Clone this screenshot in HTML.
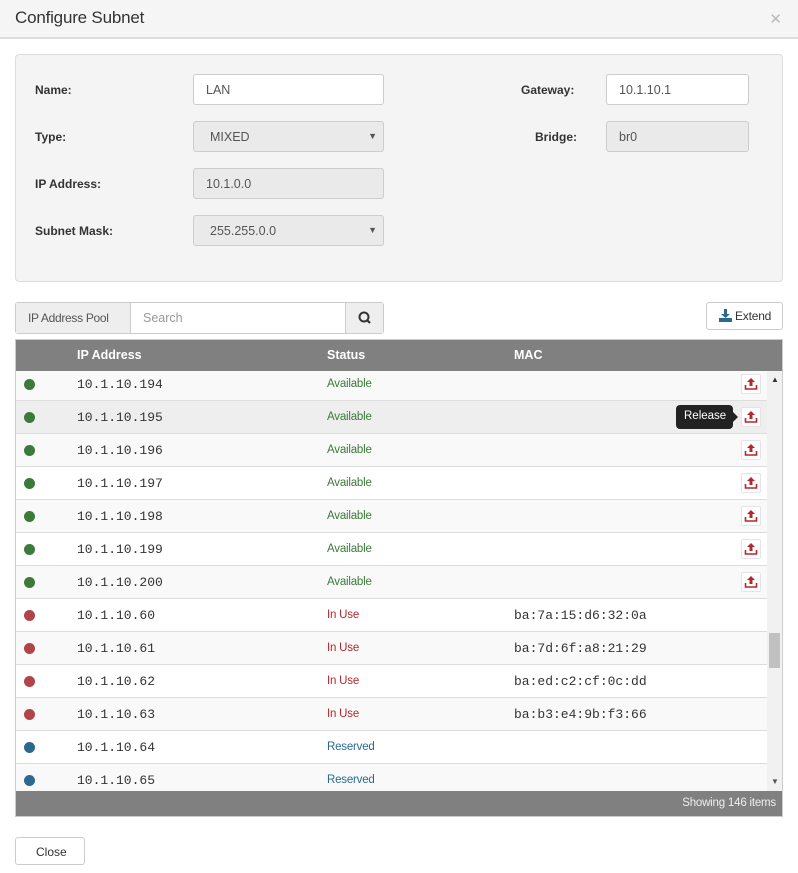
<!DOCTYPE html>
<html><head><style>
*{box-sizing:border-box;margin:0;padding:0}
body{width:798px;height:873px;background:#fff;font-family:"Liberation Sans",sans-serif;font-size:13px;color:#333;position:relative;overflow:hidden}
.hdr{position:absolute;left:0;top:0;width:798px;height:39px;background:#f5f5f5;border-bottom:2px solid #ddd}
.hdr h1{position:absolute;left:15px;top:8px;font-size:17px;font-weight:normal;color:#333;letter-spacing:-0.2px}
.hdr .x{position:absolute;right:16px;top:10px;color:#bbb;font-size:15px}
.panel{position:absolute;left:15px;top:54px;width:768px;height:228px;background:#f4f4f4;border:1px solid #ddd;border-radius:4px}
.lbl{position:absolute;font-weight:bold;font-size:12px;color:#333}
.inp{position:absolute;height:31px;border:1px solid #ccc;border-radius:3px;background:#fff;padding:8px 12px;font-size:12.5px;color:#555}
.dis{background:#eaeaea}
.arr{position:absolute;right:6px;top:9px;font-size:9px;color:#555}
.grp{position:absolute;left:15px;top:302px;height:32px;width:369px;border:1px solid #ccc;border-radius:3px;background:#fff}
.grp .a{position:absolute;left:0;top:0;width:115px;height:30px;background:#eee;border-right:1px solid #ccc;padding:8px 0 0 12px;color:#555;font-size:12px;white-space:nowrap;letter-spacing:-0.3px}
.grp .s{position:absolute;left:127px;top:8px;color:#999;font-size:12.5px}
.grp .b{position:absolute;right:0;top:0;width:38px;height:30px;background:#eee;border-left:1px solid #ccc}
.ext{position:absolute;left:706px;top:302px;width:77px;height:28px;border:1px solid #ccc;border-radius:3px;background:#fff;font-size:12px;padding:6px 0 0 28px;color:#333;letter-spacing:-0.2px}
.tbl{position:absolute;left:15px;top:339px;width:768px;height:478px;border:1px solid #ccc}
.th{position:absolute;left:0;top:0;width:766px;height:31px;background:#808080;color:#fff;font-weight:bold;font-size:12.5px}
.th span{position:absolute;top:8px}
.row{position:absolute;left:0;width:751px;height:33px;border-bottom:1px solid #ddd}
.row .d{position:absolute;left:8px;top:11px;width:11px;height:11px;border-radius:50%}
.row .ip{position:absolute;left:61px;top:9px;font-family:"Liberation Mono",monospace;font-size:13px;color:#333}
.row .st{position:absolute;left:311px;top:10px;font-size:11.5px;letter-spacing:-0.2px}
.row .mac{position:absolute;left:498px;top:9px;font-family:"Liberation Mono",monospace;font-size:13px;color:#333}
.row .rb{position:absolute;left:725px;top:6px;width:20px;height:20px;border:1px solid #e4e4e4;border-radius:2px;background:#fff}
.g{background:#3b7a3b}.r{background:#b04448}.bl{background:#2b6a8e}
.tg{color:#3b7a3b}.tr{color:#b0292e}.tb{color:#2b6a8e}
.sb{position:absolute;left:751px;top:31px;width:15px;height:420px;background:#f1f1f1}
.ft{position:absolute;left:0;top:451px;width:766px;height:25px;background:#808080;color:#eee;font-size:11.5px;text-align:right;padding:6px 6px 0 0;letter-spacing:-0.2px}
.tip{position:absolute;left:676px;top:405px;width:57px;height:24px;background:#222;color:#fff;border-radius:4px;font-size:11.5px;padding:5px 0 0 8px}
.tip:after{content:"";position:absolute;right:-5px;top:7px;border-left:5px solid #222;border-top:5px solid transparent;border-bottom:5px solid transparent}
.close{position:absolute;left:15px;top:837px;width:70px;height:28px;border:1px solid #ccc;border-radius:3px;font-size:12px;padding:7px 0 0 20px;color:#333}
</style></head><body>
<div class="hdr"><h1>Configure Subnet</h1><span class="x">✕</span></div>
<div class="panel"></div>
<div class="lbl" style="left:35px;top:83px">Name:</div>
<div class="inp" style="left:193px;top:74px;width:191px">LAN</div>
<div class="lbl" style="left:35px;top:130px">Type:</div>
<div class="inp dis" style="left:193px;top:121px;width:191px;padding-left:16px">MIXED<span class="arr">▼</span></div>
<div class="lbl" style="left:35px;top:177px">IP Address:</div>
<div class="inp dis" style="left:193px;top:168px;width:191px">10.1.0.0</div>
<div class="lbl" style="left:35px;top:224px">Subnet Mask:</div>
<div class="inp dis" style="left:193px;top:215px;width:191px;padding-left:16px">255.255.0.0<span class="arr">▼</span></div>
<div class="lbl" style="left:521px;top:83px">Gateway:</div>
<div class="inp" style="left:606px;top:74px;width:143px">10.1.10.1</div>
<div class="lbl" style="left:535px;top:130px">Bridge:</div>
<div class="inp dis" style="left:606px;top:121px;width:143px">br0</div>

<div class="grp"><div class="a">IP Address Pool</div><div class="s">Search</div><div class="b"><svg width="38" height="30"><circle cx="18" cy="14" r="4.5" fill="none" stroke="#333" stroke-width="2"/><line x1="21" y1="17" x2="24" y2="20" stroke="#333" stroke-width="2.2"/></svg></div></div>
<div class="ext"><svg style="position:absolute;left:12px;top:6px" width="13" height="13"><rect x="5" y="0" width="3" height="5" fill="#2b6a8e"/><path d="M2 5h9l-4.5 4z" fill="#2b6a8e"/><rect x="0" y="9" width="13" height="4" fill="#2b6a8e"/></svg>Extend</div>

<div class="tbl">
<div class="th"><span style="left:61px">IP Address</span><span style="left:311px">Status</span><span style="left:498px">MAC</span></div>
<div id="rows"></div>
<div class="sb"><div style="position:absolute;left:4px;top:4px;font-size:8px;color:#333">▲</div><div style="position:absolute;left:2px;top:262px;width:11px;height:35px;background:#c1c1c1"></div><div style="position:absolute;left:4px;top:406px;font-size:8px;color:#555">▼</div></div>
<div class="ft">Showing 146 items</div>
</div>
<div class="tip">Release</div>
<div class="close">Close</div>
<script>
var d=[["194","g"],["195","g"],["196","g"],["197","g"],["198","g"],["199","g"],["200","g"],["60","r","ba:7a:15:d6:32:0a"],["61","r","ba:7d:6f:a8:21:29"],["62","r","ba:ed:c2:cf:0c:dd"],["63","r","ba:b3:e4:9b:f3:66"],["64","b"],["65","b"]];
var h="";
d.forEach(function(x,i){
 var top=31+i*33-3; if(i==0)top=31;
 var hgt=i==0?30:33;
 var bg=i==1?"#eee":(i%2==0?"#f9f9f9":"#fff");
 var st=x[1]=="g"?'<span class="st tg">Available</span>':x[1]=="r"?'<span class="st tr">In Use</span>':'<span class="st tb">Reserved</span>';
 var cls=x[1]=="b"?"bl":x[1];
 var off=i==0?-3:0;
 h+='<div class="row" style="top:'+top+'px;height:'+hgt+'px;background:'+bg+'"><div class="d '+cls+'" style="top:'+(11+off)+'px"></div><span class="ip" style="top:'+(9+off)+'px">10.1.10.'+x[0]+'</span>'+st.replace('class="st','style="top:'+(10+off)+'px" class="st')+(x[2]?'<span class="mac">'+x[2]+'</span>':'')+(x[1]=="g"?'<div class="rb" style="top:'+(6+off)+'px"><svg width="18" height="18"><path d="M9 3l4 4h-2.5v4h-3V7H5z" fill="#b0292e"/><path d="M3.5 10v4h11v-4" fill="none" stroke="#b0292e" stroke-width="1.6"/></svg></div>':'')+'</div>';
});
document.getElementById("rows").innerHTML=h;
</script>
</body></html>
